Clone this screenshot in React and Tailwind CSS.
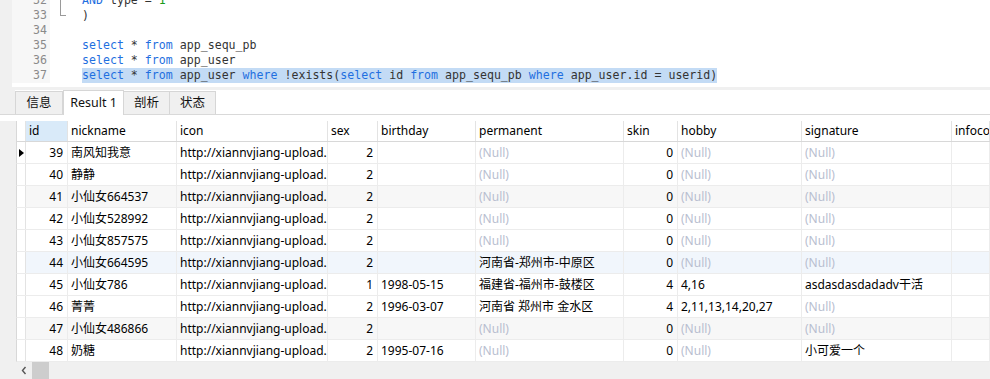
import React from 'react';

const mono = { fontFamily: '"DejaVu Sans Mono", "Liberation Mono", monospace' };

const cols = [
  { key: 'id', label: 'id', w: 'w-[42px]', right: true },
  { key: 'nickname', label: 'nickname', w: 'w-[109px]' },
  { key: 'icon', label: 'icon', w: 'w-[151px]' },
  { key: 'sex', label: 'sex', w: 'w-[50px]', right: true },
  { key: 'birthday', label: 'birthday', w: 'w-[98px]' },
  { key: 'permanent', label: 'permanent', w: 'w-[148px]' },
  { key: 'skin', label: 'skin', w: 'w-[54px]', right: true },
  { key: 'hobby', label: 'hobby', w: 'w-[124px]' },
  { key: 'signature', label: 'signature', w: 'w-[150px]' },
  { key: 'infoco', label: 'infoco', w: 'flex-1' },
];

const N = null;
const url = 'http://xiannvjiang-upload.';
const rows = [
  ['39', '南风知我意', url, '2', '', N, '0', N, N, ''],
  ['40', '静静', url, '2', '', N, '0', N, N, ''],
  ['41', '小仙女664537', url, '2', '', N, '0', N, N, ''],
  ['42', '小仙女528992', url, '2', '', N, '0', N, N, ''],
  ['43', '小仙女857575', url, '2', '', N, '0', N, N, ''],
  ['44', '小仙女664595', url, '2', '', '河南省-郑州市-中原区', '0', N, N, ''],
  ['45', '小仙女786', url, '1', '1998-05-15', '福建省-福州市-鼓楼区', '4', '4,16', 'asdasdasdadadv干活', ''],
  ['46', '菁菁', url, '2', '1996-03-07', '河南省 郑州市 金水区', '4', '2,11,13,14,20,27', N, ''],
  ['47', '小仙女486866', url, '2', '', N, '0', N, N, ''],
  ['48', '奶糖', url, '2', '1995-07-16', N, '0', N, '小可爱一个', ''],
];

const rowBg = ['bg-white', 'bg-white', 'bg-[#f7f7f7]', 'bg-white', 'bg-white', 'bg-[#f1f6fc]', 'bg-white', 'bg-white', 'bg-[#f7f7f7]', 'bg-white'];

function Kw({ children }) {
  return <span className="text-[#1f6fe0]">{children}</span>;
}

function CodeLine({ num, children, fold }) {
  return (
    <div className="flex h-[15px] items-center leading-[15px]">
      <div className="w-[38px] bg-[#f7f7f7] pr-[3px] text-right text-[#8a8a8a] h-full">{num}</div>
      <div className="w-[32px] h-full pl-[10px] bg-white">
        {fold === 'line' && <div className="h-full w-[6px] border-l border-[#9a9a9a]" />}
        {fold === 'end' && <div className="h-[8px] w-[6px] border-l border-b border-[#9a9a9a]" />}
      </div>
      <div className="whitespace-pre text-[#333]">{children}</div>
    </div>
  );
}

export default function App() {
  return (
    <div className="w-[990px] h-[379px] bg-[#f0f0f0] overflow-hidden flex flex-col" style={{ fontFamily: '"Noto Sans", "Noto Sans CJK SC", sans-serif' }}>
      {/* editor */}
      <div className="ml-[12px] h-[87px] bg-white overflow-hidden text-[11.6px]" style={mono}>
        <div className="-mt-[7px] flex flex-col">
          <CodeLine num="32" fold="line"><Kw>AND</Kw> type = <span className="text-[#1a9a1a]">1</span></CodeLine>
          <CodeLine num="33" fold="end">)</CodeLine>
          <CodeLine num="34"> </CodeLine>
          <CodeLine num="35"><Kw>select</Kw> * <Kw>from</Kw> app_sequ_pb</CodeLine>
          <CodeLine num="36"><Kw>select</Kw> * <Kw>from</Kw> app_user</CodeLine>
          <CodeLine num="37">
            <span className="bg-[#c3dbf5] inline-block h-[15px]">
              <Kw>select</Kw> * <Kw>from</Kw> app_user <Kw>where</Kw> !exists(<Kw>select</Kw> id <Kw>from</Kw> app_sequ_pb <Kw>where</Kw> app_user.id = userid)
            </span>
          </CodeLine>
        </div>
      </div>

      {/* tabs */}
      <div className="mt-[3px] h-[25px] flex items-end bg-white border-b border-[#d9d9d9] pl-[15px] relative">
        <div className="absolute left-0 top-0 bottom-0 w-[15px] bg-[#f0f0f0]" />
        <div className="h-[23px] w-[48px] flex items-center justify-center bg-[#f0f0f0] border border-b-0 border-[#d6d6d6] text-[12.5px] text-[#111]">信息</div>
        <div className="h-[25px] w-[61px] flex items-center justify-center bg-white border border-b-0 border-[#d6d6d6] text-[12.5px] text-[#111] -mb-px relative z-10">Result 1</div>
        <div className="h-[23px] w-[46px] flex items-center justify-center bg-[#f0f0f0] border border-b-0 border-l-0 border-[#d6d6d6] text-[12.5px] text-[#111]">剖析</div>
        <div className="h-[23px] w-[46px] flex items-center justify-center bg-[#f0f0f0] border border-b-0 border-l-0 border-[#d6d6d6] text-[12.5px] text-[#111]">状态</div>
      </div>

      {/* grid */}
      <div className="ml-[16px] flex-1 bg-white flex flex-col text-[12px] text-black">
        <div className="h-[6px] -ml-[16px] bg-white" />
        <div className="flex h-[21px] border-b border-[#d8d8d8] border-l border-l-[#d8d8d8]">
          <div className="w-[9px] border-r border-[#e3e3e3]" />
          {cols.map((c) => (
            <div key={c.key} className={`${c.w} shrink-0 h-full flex items-center pl-[3px] border-r border-[#e3e3e3] whitespace-nowrap overflow-hidden ${c.key === 'id' ? 'bg-[#d9eaf9]' : ''}`}>
              {c.label}
            </div>
          ))}
        </div>
        {rows.map((r, i) => (
          <div key={i} className={`flex h-[22px] border-b border-[#ececec] border-l border-l-[#d8d8d8] ${rowBg[i]}`}>
            <div className="w-[9px] border-r border-[#e3e3e3] bg-white flex items-center">
              {i === 0 && (
                <svg width="7" height="10" viewBox="0 0 7 10" className="ml-[1px]"><path d="M1 1 L6 5 L1 9 Z" fill="#000" /></svg>
              )}
            </div>
            {cols.map((c, j) => {
              const v = r[j];
              return (
                <div key={c.key} className={`${c.w} shrink-0 h-full flex items-center border-r border-[#ececec] whitespace-nowrap overflow-hidden ${c.right ? 'justify-end pr-[4px]' : 'pl-[3px]'}`}>
                  {v === null ? <span className="text-[#b8bed0]">(Null)</span> : v}
                </div>
              );
            })}
          </div>
        ))}
        <div className="flex-1" />
        {/* h scrollbar */}
        <div className="h-[17px] bg-[#f0f0f0] flex -ml-px">
          <div className="w-[17px] flex items-center justify-center">
            <svg width="6" height="9" viewBox="0 0 6 9"><path d="M4.5 1 L1.5 4.5 L4.5 8" stroke="#555" strokeWidth="1.4" fill="none" /></svg>
          </div>
          <div className="w-[17px] bg-[#cdcdcd]" />
        </div>
      </div>
    </div>
  );
}
